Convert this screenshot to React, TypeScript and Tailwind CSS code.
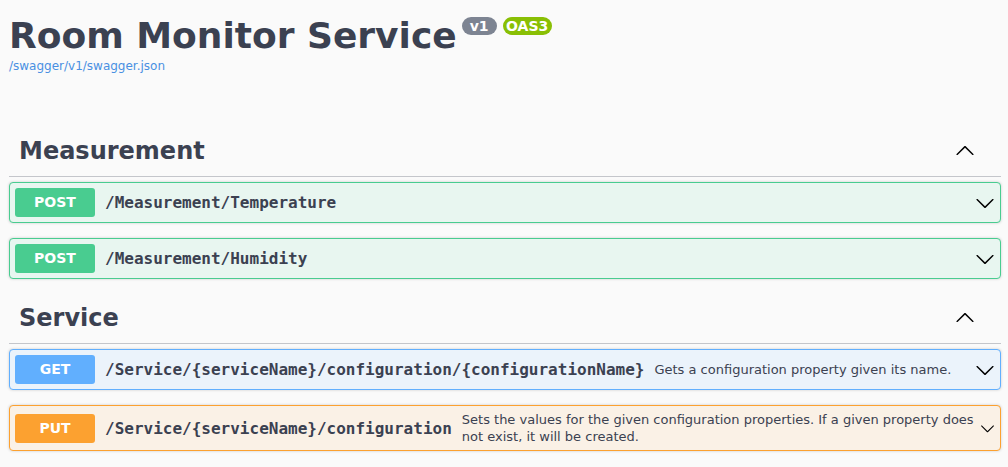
import React from "react";

const SANS = { fontFamily: '"DejaVu Sans", sans-serif' };

function ChevronDown({ size = 20 }: { size?: number }) {
  return (
    <svg width={size} height={size} viewBox="0 0 20 20" className="shrink-0" aria-hidden>
      <path
        fill="#000"
        d="M17.418 6.109c.272-.268.709-.268.979 0s.271.701 0 .969l-7.908 7.83c-.27.268-.707.268-.979 0l-7.908-7.83c-.27-.268-.27-.701 0-.969.271-.268.709-.268.979 0L10 13.25l7.418-7.141z"
      />
    </svg>
  );
}

function ChevronUp() {
  return (
    <svg width={20} height={20} viewBox="0 0 20 20" className="shrink-0 mb-[4px]" aria-hidden>
      <path
        fill="#000"
        d="M17.418 14.908C17.69 15.176 18.127 15.176 18.397 14.908C18.667 14.64 18.668 14.207 18.397 13.939L10.489 6.109C10.219 5.841 9.782 5.841 9.51 6.109L1.602 13.939C1.332 14.207 1.332 14.64 1.602 14.908C1.873 15.176 2.311 15.176 2.581 14.908L10 7.767L17.418 14.908Z"
      />
    </svg>
  );
}

type Method = "POST" | "GET" | "PUT";

const styles: Record<Method, { block: string; badge: string }> = {
  POST: { block: "border-[#49cc90] bg-[#e8f6f0]", badge: "bg-[#49cc90]" },
  GET: { block: "border-[#61affe] bg-[#ebf3fb]", badge: "bg-[#61affe]" },
  PUT: { block: "border-[#fca130] bg-[#faf1e6]", badge: "bg-[#fca130]" },
};

function Op({
  method,
  path,
  desc,
  chevron = 20,
}: {
  method: Method;
  path: string;
  desc?: React.ReactNode;
  chevron?: number;
}) {
  const s = styles[method];
  return (
    <div
      className={`mb-[15px] flex items-center rounded-[4px] border p-[5px] shadow-[0_0_3px_rgba(0,0,0,0.19)] ${s.block}`}
    >
      <div
        className={`flex h-[29px] w-[80px] shrink-0 items-center justify-center rounded-[3px] text-[14px] font-bold text-white ${s.badge}`}
        style={SANS}
      >
        {method}
      </div>
      <div
        className="shrink-0 px-[10px] text-[16px] font-bold leading-[19px] text-[#3b4151]"
        style={{ fontFamily: '"DejaVu Sans Mono", monospace' }}
      >
        {path}
      </div>
      <div className="flex-1 text-[13px] leading-[17px] text-[#3b4151]" style={SANS}>
        {desc}
      </div>
      <ChevronDown size={chevron} />
    </div>
  );
}

function TagHeader({ title }: { title: string }) {
  return (
    <div className="flex h-[50px] items-center justify-between border-b border-[#c4c6cb] pl-[10px] pr-[26px]">
      <h3 className="mb-[2px] text-[24px] font-bold leading-[28px] text-[#3b4151]" style={SANS}>
        {title}
      </h3>
      <ChevronUp />
    </div>
  );
}

export default function App() {
  return (
    <div className="min-h-[467px] w-full bg-[#fafafa] pl-[9px] pr-[7px] pt-[15px]" style={SANS}>
      <div className="flex items-start">
        <h2 className="text-[36px] font-bold leading-[42px] text-[#3b4151]">Room Monitor Service</h2>
        <span className="ml-[5px] mt-[2px] flex h-[18px] w-[35px] items-center justify-center rounded-full bg-[#7d8492] text-[14px] font-bold text-white">
          v1
        </span>
        <span className="ml-[6px] mt-[2px] flex h-[18px] w-[49px] items-center justify-center rounded-full bg-[#89bf04] text-[14px] font-bold text-white">
          OAS3
        </span>
      </div>
      <div className="mt-[2px] text-[12px] leading-[14px] text-[#4990e2]">/swagger/v1/swagger.json</div>

      <div className="mt-[54px]">
        <TagHeader title="Measurement" />
        <div className="pt-[5px]">
          <Op method="POST" path="/Measurement/Temperature" />
          <Op method="POST" path="/Measurement/Humidity" />
        </div>
      </div>

      <div>
        <TagHeader title="Service" />
        <div className="pt-[5px]">
          <Op
            method="GET"
            path="/Service/{serviceName}/configuration/{configurationName}"
            desc="Gets a configuration property given its name."
          />
          <Op
            method="PUT"
            path="/Service/{serviceName}/configuration"
            chevron={15}
            desc={
              <>
                <span className="whitespace-nowrap">
                  Sets the values for the given configuration properties. If a given property does
                </span>
                <br />
                not exist, it will be created.
              </>
            }
          />
        </div>
      </div>
    </div>
  );
}
